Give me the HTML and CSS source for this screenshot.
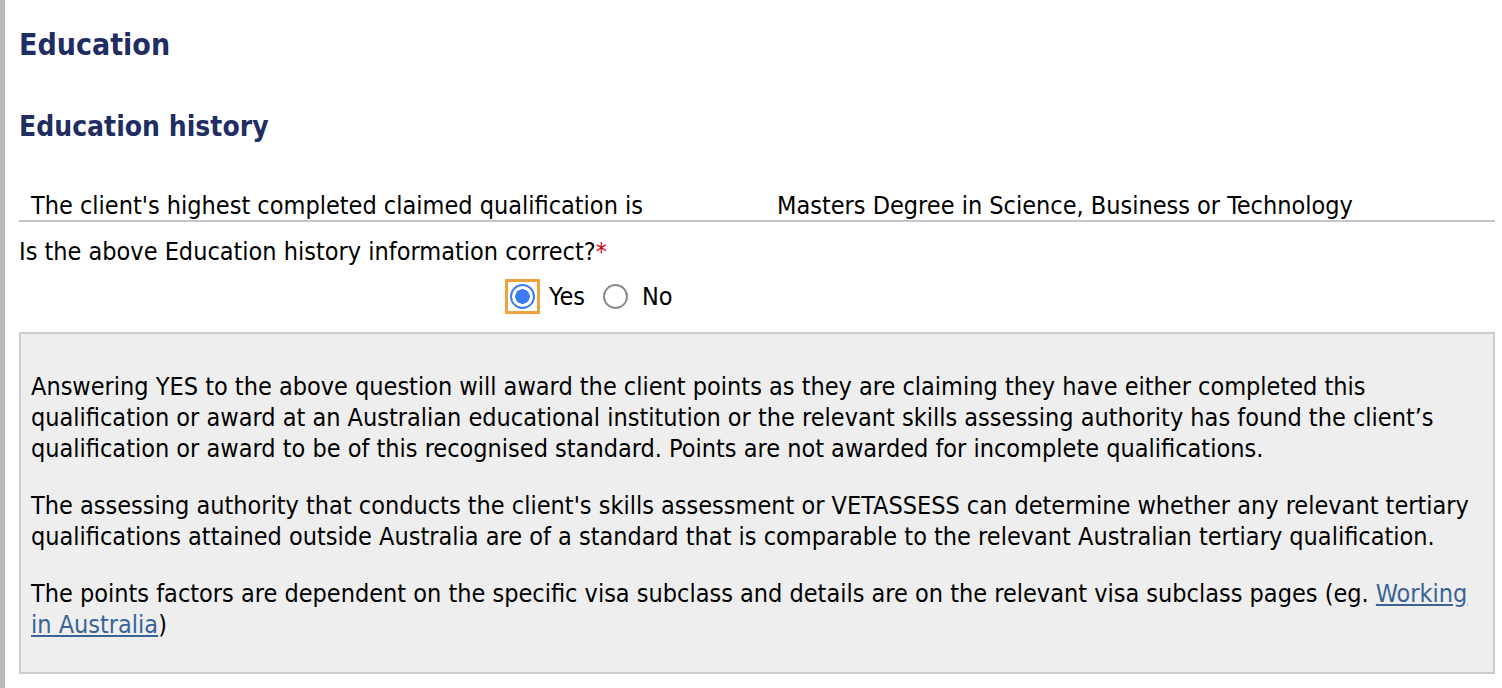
FILE: index.html
```html
<!DOCTYPE html>
<html lang="en">
<head>
    <meta charset="UTF-8">
    <title>Education</title>
    <link rel="stylesheet" href="styles.css">
</head>
<body>
    <div class="page">
        <h1>Education</h1>
        <h2>Education history</h2>

        <div class="detail-row">
            <div class="detail-label">The client's highest completed claimed qualification is</div>
            <div class="detail-value">Masters Degree in Science, Business or Technology</div>
        </div>

        <div class="question">
            <div class="question-text">Is the above Education history information correct?<span class="required">*</span></div>
            <div class="radio-group">
                <label class="radio-option">
                    <span class="focus-ring"><input type="radio" name="correct" value="yes" checked></span>
                    Yes
                </label>
                <label class="radio-option">
                    <input type="radio" name="correct" value="no">
                    No
                </label>
            </div>
        </div>

        <div class="info-panel">
            <p>Answering YES to the above question will award the client points as they are claiming they have either completed this qualification or award at an Australian educational institution or the relevant skills assessing authority has found the client’s qualification or award to be of this recognised standard. Points are not awarded for incomplete qualifications.</p>
            <p>The assessing authority that conducts the client's skills assessment or VETASSESS can determine whether any relevant tertiary qualifications attained outside Australia are of a standard that is comparable to the relevant Australian tertiary qualification.</p>
            <p>The points factors are dependent on the specific visa subclass and details are on the relevant visa subclass pages (eg. <a href="#">Working in Australia</a>)</p>
        </div>
    </div>
</body>
</html>
```

FILE: styles.css
```css
body {
    margin: 0;
    background: #ffffff;
    font-family: "DejaVu Sans Condensed", "DejaVu Sans", sans-serif;
    color: #000;
}
.page {
    border-left: 5px solid #b9b9be;
    padding: 0 7px 0 14px;
    min-height: 688px;
    box-sizing: border-box;
}
h1 {
    margin: 0;
    padding-top: 28px;
    font-size: 30px;
    line-height: 34px;
    color: #1f2d63;
}
h2 {
    margin: 0;
    padding-top: 49px;
    font-size: 28px;
    line-height: 32px;
    color: #1f2d63;
}
.detail-row {
    display: flex;
    margin-top: 49px;
    padding-left: 12px;
    border-bottom: 2px solid #c6c6ca;
    font-size: 25px;
    line-height: 28px;
}
.detail-label {
    width: 746px;
}
.question {
    padding-top: 15px;
    font-size: 25px;
    line-height: 30px;
}
.required {
    color: #d0021b;
}
.radio-group {
    display: flex;
    align-items: center;
    gap: 18px;
    padding: 12px 0 0 486px;
}
.radio-option {
    display: flex;
    align-items: center;
    gap: 14px;
}
.focus-ring {
    display: flex;
    padding: 2px;
    margin-right: -5px;
    border: 3px solid #f0a13c;
}
input[type="radio"] {
    appearance: none;
    margin: 0;
    width: 25px;
    height: 25px;
    border-radius: 50%;
    border: 2px solid #8a8a8a;
    background: #fff;
    box-sizing: border-box;
}
input[type="radio"]:checked {
    border: 2px solid #3b7cf2;
    background: radial-gradient(circle, #3b7cf2 0 7px, #fff 7.5px);
}
.info-panel {
    margin-top: 18px;
    padding: 37px 10px 32px;
    background: #eeeeee;
    border: 2px solid #cbcbcb;
    font-size: 25px;
    line-height: 31px;
}
.info-panel p {
    margin: 0 0 26px;
}
.info-panel p:last-child {
    margin-bottom: 0;
}
.info-panel a {
    color: #3a6396;
}
```
